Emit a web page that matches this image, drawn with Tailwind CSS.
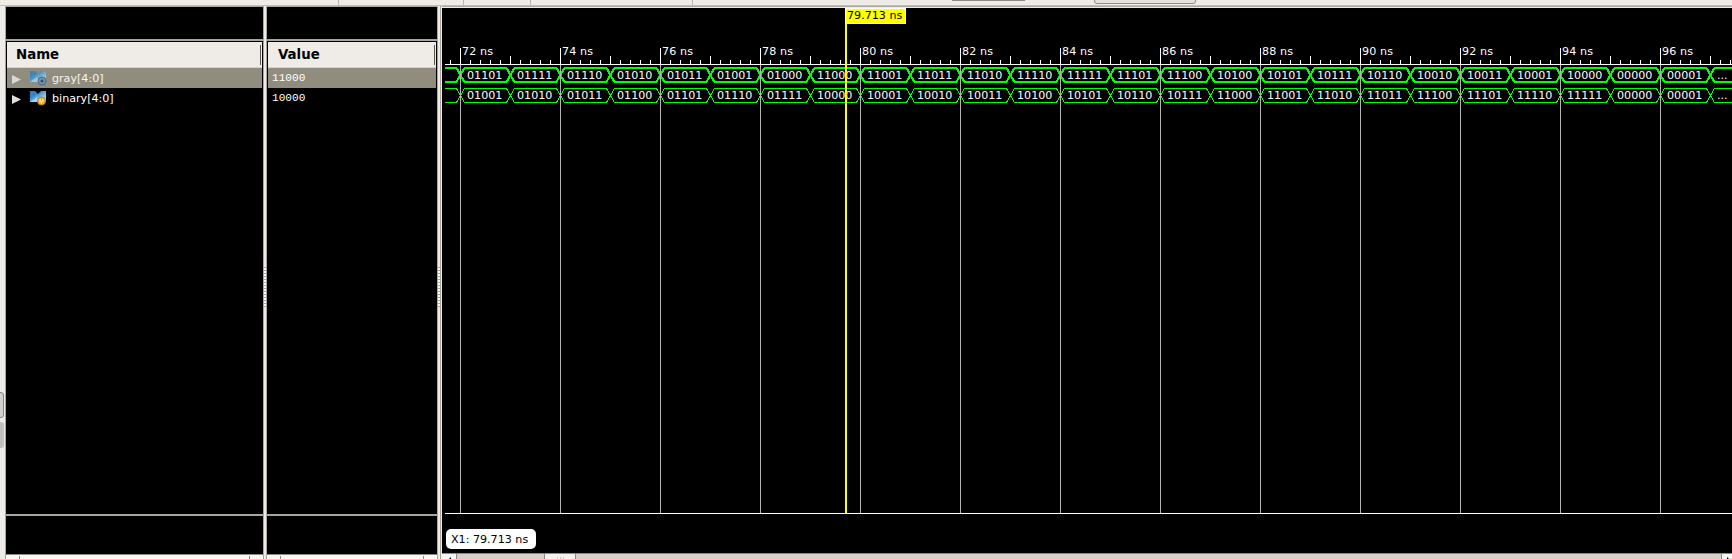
<!DOCTYPE html>
<html lang="en">
<head>
<meta charset="utf-8">
<title>Waveform</title>
<script src="https://cdn.jsdelivr.net/npm/@tailwindcss/browser@4"></script>
</head>
<body class="w-[1732px] h-[559px] overflow-hidden bg-[#efebe7] text-white font-['DejaVu_Sans',sans-serif]">
<div class="flex flex-col w-[1732px] h-[559px] overflow-hidden">
  <header class="relative h-[6px] w-full shrink-0 border-b border-[#c4bfb9]">
    <i class="absolute left-[338px] top-0 w-px h-[5px] bg-[#b9b4ae]"></i>
    <i class="absolute left-[463px] top-0 w-px h-[5px] bg-[#b9b4ae]"></i>
    <i class="absolute left-[530px] top-0 w-px h-[5px] bg-[#b9b4ae]"></i>
    <i class="absolute left-[692px] top-0 w-px h-[5px] bg-[#b9b4ae]"></i>
    <i class="absolute left-[952px] top-0 w-[73px] h-px bg-[#8f8883]"></i>
    <i class="absolute left-[1094px] top-[-4px] w-[102px] h-[8px] rounded-[3px] border border-[#8f8883] bg-[#e8e0dc]"></i>
  </header>
  <main class="flex flex-1 min-h-0">
    <aside class="relative w-[6px] shrink-0 border-r border-[#aaa59f] overflow-hidden">
      <i class="absolute left-[-6px] top-[386px] w-[10px] h-[26px] rounded-[3px] border border-[#8a847e] bg-[#d6d0ca]"></i>
      <i class="absolute left-[-6px] top-[416px] w-[10px] h-[26px] rounded-[3px] bg-[#c4bfb9]"></i>
    </aside>

    <section class="flex flex-col w-[257px] shrink-0 border-t border-[#aaa59f] bg-black">
      <div class="h-[32px] shrink-0"></div>
      <div class="h-[2px] shrink-0 bg-[#aaa59f]"></div>
      <div class="mt-px ml-px mr-px h-[26px] shrink-0 flex items-center justify-between bg-[#efebe7] border-b border-[#d6d1ca] text-black">
        <span class="ml-[9px] text-[13.33px] leading-[16px] font-bold">Name</span><i class="mr-px w-px h-[20px] bg-[#5a5753]"></i>
      </div>
      <div class="ml-px mr-px h-[20px] shrink-0 flex items-center bg-[#918d7e] text-[#f4f4f0]">
        <svg class="ml-[5px] mt-[3px]" width="9" height="9"><path d="M0 0L9 4.500L0 9Z" fill="#d8d8d8"/></svg>
        <svg class="ml-[9px]" width="17" height="16"><use href="#bus" opacity=".85"/><circle cx="12" cy="11" r="4" fill="#7592ab" stroke="#4c6a85"/><path d="M12 9.500v3M10.500 11h3" stroke="#23394f"/></svg>
        <span class="ml-[5px] mt-[2px] text-[11.11px] leading-[14px]">gray[4:0]</span>
      </div>
      <div class="ml-px mr-px h-[20px] shrink-0 flex items-center">
        <svg class="ml-[5px] mt-[3px]" width="9" height="9"><path d="M0 0L9 4.500L0 9Z" fill="#e0e0e0"/></svg>
        <svg class="ml-[9px]" width="17" height="16"><use href="#bus"/><circle cx="11.500" cy="11" r="4" fill="#efb432" stroke="#b57d19"/><path d="M10 9v2q1.500 1.500 3 0v-2M11.500 11.500v2" stroke="#fff3c0" fill="none"/></svg>
        <span class="ml-[5px] mt-[2px] text-[11.11px] leading-[14px]">binary[4:0]</span>
      </div>
      <div class="flex-1"></div>
      <div class="h-[2px] shrink-0 bg-[#aaa59f]"></div>
      <div class="h-[38px] shrink-0"></div>
      <div class="h-[5px] shrink-0 flex justify-between bg-[#faf8f5] border-t border-[#8f8883] px-[13px]"><i class="w-px mt-px bg-[#8f8883]"></i><i class="w-px mt-px bg-[#8f8883]"></i></div>
    </section>

    <div class="w-[4px] shrink-0 border-x border-[#aaa59f] bg-[#efebe7] pt-[261px]"><div class="h-[40px] bg-[repeating-linear-gradient(#aaa59f_0_1px,#fff_1px_3px)]"></div></div>

    <section class="flex flex-col w-[170px] shrink-0 border-t border-[#aaa59f] bg-black">
      <div class="h-[32px] shrink-0"></div>
      <div class="h-[2px] shrink-0 bg-[#aaa59f]"></div>
      <div class="mt-px ml-px mr-px h-[26px] shrink-0 flex items-center justify-between bg-[#efebe7] border-b border-[#d6d1ca] text-black">
        <span class="ml-[10px] text-[13.33px] leading-[16px] font-bold">Value</span><i class="mr-px w-px h-[20px] bg-[#5a5753]"></i>
      </div>
      <div class="ml-px mr-px pl-[4px] h-[20px] shrink-0 bg-[#918d7e] text-[11.11px] leading-[20px] font-['Liberation_Mono',monospace]">11000</div>
      <div class="ml-px mr-px pl-[4px] h-[20px] shrink-0 text-[11.11px] leading-[20px] font-['Liberation_Mono',monospace]">10000</div>
      <div class="flex-1"></div>
      <div class="h-[2px] shrink-0 bg-[#aaa59f]"></div>
      <div class="h-[38px] shrink-0"></div>
      <div class="h-[5px] shrink-0 flex justify-between bg-[#faf8f5] border-t border-[#8f8883] px-[13px]"><i class="w-px mt-px bg-[#8f8883]"></i><i class="w-px mt-px bg-[#8f8883]"></i></div>
    </section>

    <div class="w-[4px] shrink-0 border-x border-[#aaa59f] bg-[#efebe7] pt-[261px]"><div class="h-[40px] bg-[repeating-linear-gradient(#aaa59f_0_1px,#fff_1px_3px)]"></div></div>
    <div class="w-px shrink-0 bg-[#efebe7]"></div>

    <section class="relative flex flex-col flex-1 min-w-0 bg-black border-t border-[#aaa59f]">
      <div class="h-px shrink-0 bg-[#efebe7]"></div>
      <svg id="wave" class="block shrink-0" width="1290" height="545" viewBox="442 8 1290 545" shape-rendering="crispEdges"></svg>
      <div class="absolute left-[403px] top-px h-[16px] w-[61px] border border-white bg-[#ffff00] text-black text-[11.11px] leading-[14px] pl-px whitespace-nowrap">79.713 ns</div>
      <div class="absolute left-[4px] top-[522px] h-[20px] w-[90px] rounded-[5px] bg-white text-black text-[11.11px] leading-[21px] pl-[5px] whitespace-nowrap">X1: 79.713 ns</div>
      <div class="flex-1 flex border-t border-[#8f8883] bg-[#d8cfc7]">
        <div class="w-[15px] border-r border-[#8f8883] bg-[#f8f6f3]"><svg width="14" height="6"><path d="M9 3v3H6Z" fill="#000"/></svg></div>
        <div class="ml-[87px] w-[32px] border-x border-[#8f8883] bg-[#f4f1ee] flex justify-center gap-[2px] pt-[3px]"><i class="w-px bg-[#c9c4be]"></i><i class="w-px bg-[#c9c4be]"></i><i class="w-px bg-[#c9c4be]"></i></div>
        <div class="ml-auto w-[11px] border-l border-[#8f8883] bg-[#f8f6f3]"><svg width="10" height="6"><path d="M5 3v3H8Z" fill="#000"/></svg></div>
      </div>
    </section>
  </main>
</div>
<svg class="absolute w-0 h-0"><defs>
  <linearGradient id="sky" x2="1" y2="1"><stop stop-color="#3a7fb8"/><stop offset=".3" stop-color="#2d87c9"/><stop offset=".6" stop-color="#74bce8"/><stop offset="1" stop-color="#d6ecf8"/></linearGradient>
  <g id="bus"><path d="M0 1H5L8 4L11 1H16V12H0Z" fill="url(#sky)"/><path d="M0 12L7 7L9 12Z" fill="#b5dcf3" opacity=".7"/></g>
</defs></svg>
<script>
const gray = '01101 01111 01110 01010 01011 01001 01000 11000 11001 11011 11010 11110 11111 11101 11100 10100 10101 10111 10110 10010 10011 10001 10000 00000 00001 ...'.split(' ');
const binary = '01001 01010 01011 01100 01101 01110 01111 10000 10001 10010 10011 10100 10101 10110 10111 11000 11001 11010 11011 11100 11101 11110 11111 00000 00001 ...'.split(' ');
let s = '';
const rect = (x, y, w, h, c) => { s += `<rect x="${x}" y="${y}" width="${w}" height="${h}" fill="${c}"/>`; };
const label = (x, y, t, gap = 0) => { s += `<text x="${x}" y="${y}" fill="#fff" font-size="11.11" letter-spacing="${gap}" font-family="DejaVu Sans, sans-serif">${t}</text>`; };
function bus(top, bottom, width, values) {
  const m = (top + bottom) / 2;
  let d = `M445 ${top}H456.500L460.500 ${m}L456.500 ${bottom}H445`;
  values.forEach((v, i) => {
    const a = 460.5 + i * 50, b = a + 50;
    d += `M${a} ${m}L${a + 4} ${top}H${b - 4}L${b} ${m}L${b - 4} ${bottom}H${a + 4}Z`;
  });
  s += `<path d="${d}" fill="none" stroke="#00ff00" stroke-width="${width}"/>`;
  values.forEach((v, i) => label(467 + i * 50, Math.round(m + 3.5), v));
}
bus(68, 82, 2, gray);
bus(88.5, 102.5, 1, binary);
for (let x = 450; x < 1732; x += 10) rect(x, 60, 1, 4, '#fff');
for (let x = 510; x < 1732; x += 100) rect(x, 56, 1, 8, '#fff');
for (let x = 460, t = 72; x < 1732; x += 100, t += 2) {
  rect(x, 48, 1, 16, '#fff');
  rect(x, 65, 1, 448, '#b4b4b4');
  label(x + 2, 55, t + ' ns', 0.15);
}
rect(445, 64, 1287, 1, '#fff');
rect(445, 513, 1287, 1, '#fff');
rect(845, 24, 2, 489, '#ffff00');
document.getElementById('wave').innerHTML = s;
</script>
</body>
</html>
